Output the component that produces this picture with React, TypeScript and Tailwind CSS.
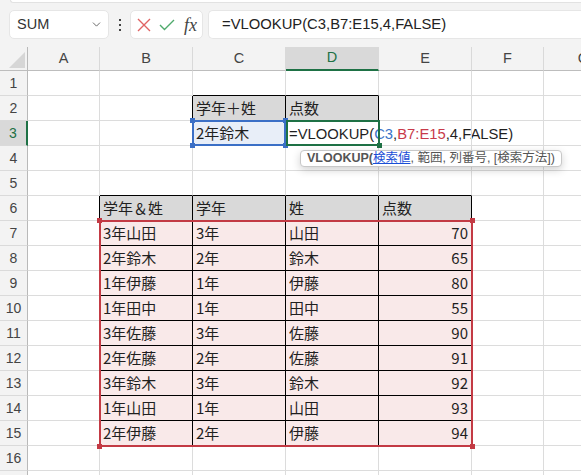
import { ChevronDown } from "lucide-react";

type Col = { key: string; w: string };

const COLS: Col[] = [
  { key: "A", w: "w-[72px]" },
  { key: "B", w: "w-[93px]" },
  { key: "C", w: "w-[93px]" },
  { key: "D", w: "w-[93px]" },
  { key: "E", w: "w-[93px]" },
  { key: "F", w: "w-[72px]" },
  { key: "G", w: "w-[80px]" },
];

const ROW_COUNT = 17;

const SCORES: [string, string, string, number][] = [
  ["3年山田", "3年", "山田", 70],
  ["2年鈴木", "2年", "鈴木", 65],
  ["1年伊藤", "1年", "伊藤", 80],
  ["1年田中", "1年", "田中", 55],
  ["3年佐藤", "3年", "佐藤", 90],
  ["2年佐藤", "2年", "佐藤", 91],
  ["3年鈴木", "3年", "鈴木", 92],
  ["1年山田", "1年", "山田", 93],
  ["2年伊藤", "2年", "伊藤", 94],
];

const inRange = (r: number, c: number, r1: number, r2: number, c1: number, c2: number) =>
  r >= r1 && r <= r2 && c >= c1 && c <= c2;

// cells that carry thin black borders
const inTable = (r: number, c: number) => inRange(r, c, 2, 3, 3, 4) || inRange(r, c, 6, 15, 2, 5);

const CELL_FONT = "font-['Noto_Sans_CJK_JP',sans-serif]";
const UI_FONT = "font-['Liberation_Sans','Noto_Sans_CJK_JP',sans-serif]";

function Formula() {
  return (
    <span className={`${UI_FONT} text-[14.8px]`}>
      =VLOOKUP(<span className="text-[#3a73c8]">C3</span>,<span className="text-[#c83a4a]">B7:E15</span>,4,FALSE)
    </span>
  );
}

function cellContent(r: number, c: number) {
  if (r === 2 && c === 3) return "学年＋姓";
  if (r === 2 && c === 4) return "点数";
  if (r === 3 && c === 3) return "2年鈴木";
  if (r === 6 && c >= 2 && c <= 5) return ["学年＆姓", "学年", "姓", "点数"][c - 2];
  if (r >= 7 && r <= 15 && c >= 2 && c <= 5) return SCORES[r - 7][c - 2];
  return null;
}

function Corner({ pos, color }: { pos: string; color: string }) {
  return <div className={`absolute w-[5px] h-[5px] ${pos} ${color}`} />;
}

function Cell({ r, c }: { r: number; c: number }) {
  const col = COLS[c - 1];
  const right = inTable(r, c) || inTable(r, c + 1) ? "border-r-black" : "border-r-[#dcdcdc]";
  const bottom = inTable(r, c) || inTable(r + 1, c) ? "border-b-black" : "border-b-[#dcdcdc]";

  let bg = "";
  if ((r === 2 && (c === 3 || c === 4)) || (r === 6 && c >= 2 && c <= 5)) bg = "bg-[#d9d9d9]";
  else if (r >= 7 && r <= 15 && c >= 2 && c <= 5) bg = "bg-[#f9e9e9]";
  else if (r === 3 && c === 3) bg = "bg-[#e8eef8]";

  const value = cellContent(r, c);
  const numeric = typeof value === "number";

  return (
    <div
      className={`relative shrink-0 h-[25px] border-r border-b ${col.w} ${right} ${bottom} ${bg} ${
        numeric ? "text-right" : "text-left"
      } px-[3px] leading-[24px] text-[15px] text-[#1f1f1f] whitespace-nowrap ${CELL_FONT}`}
    >
      {r === 3 && c === 4 ? <Formula /> : value}

      {/* active selection on C3 */}
      {r === 3 && c === 3 && (
        <div className="absolute -left-[1px] -top-[1px] w-[94px] h-[26px] border-2 border-[#3b6fc6] z-10">
          <Corner pos="-left-[4px] -top-[4px]" color="bg-[#3b6fc6]" />
          <Corner pos="-right-[4px] -top-[4px]" color="bg-[#3b6fc6]" />
          <Corner pos="-left-[4px] -bottom-[4px]" color="bg-[#3b6fc6]" />
          <Corner pos="-right-[4px] -bottom-[4px]" color="bg-[#3b6fc6]" />
        </div>
      )}

      {/* cell being edited */}
      {r === 3 && c === 4 && (
        <div className="absolute left-0 -top-[1px] w-[94px] h-[26px] border-2 border-[#1e7145] z-10">
          <div className="absolute -right-[4px] -bottom-[4px] w-[5px] h-[5px] bg-[#1e7145]" />
        </div>
      )}
    </div>
  );
}

function FormulaBar() {
  return (
    <div className="h-[47px] bg-[#f3f3f3]">
      <div className="h-[3px] ml-[10px] bg-white rounded-bl-[4px] border-b border-l border-[#e2e2e2]" />
      <div className="flex mt-[7px] pl-[9px]">
        <div className="w-[100px] h-[29px] bg-white rounded-[5px] border border-[#e6e6e6] flex items-center justify-between pl-[7px] pr-[5px]">
          <span className={`${UI_FONT} text-[14.5px] text-[#333]`}>SUM</span>
          <ChevronDown size={13} strokeWidth={1.6} className="text-[#555]" />
        </div>
        <div className="w-[21px] flex flex-col items-center justify-center gap-[3px]">
          <div className="w-[2px] h-[2px] bg-[#444]" />
          <div className="w-[2px] h-[2px] bg-[#444]" />
          <div className="w-[2px] h-[2px] bg-[#444]" />
        </div>
        <div className="w-[73px] h-[29px] bg-white rounded-[5px] border border-[#e6e6e6] flex items-center pl-[6px] gap-[8px]">
          <svg width="14" height="14" viewBox="0 0 14 14">
            <path d="M1 1 L13 13 M13 1 L1 13" stroke="#e06464" strokeWidth="1.4" fill="none" />
          </svg>
          <svg width="16" height="12" viewBox="0 0 16 12">
            <path d="M1 6 L5.5 10.5 L15 1" stroke="#4faa6c" strokeWidth="1.4" fill="none" />
          </svg>
          <span className="font-['Liberation_Serif',serif] italic text-[18px] leading-none text-[#444] ml-[1px]">
            fx
          </span>
        </div>
        <div className="ml-[5px] flex-1 h-[29px] bg-white rounded-l-[5px] border border-r-0 border-[#e6e6e6] flex items-center pl-[13px]">
          <span className={`${UI_FONT} text-[14.8px] text-[#222]`}>=VLOOKUP(C3,B7:E15,4,FALSE)</span>
        </div>
      </div>
    </div>
  );
}

export default function App() {
  const rows = Array.from({ length: ROW_COUNT }, (_, i) => i + 1);

  return (
    <div className="w-[581px] h-[475px] overflow-hidden bg-white">
      <FormulaBar />

      <div className="relative">
        {/* column headers */}
        <div className="flex h-[24px]">
          <div className="shrink-0 w-[28px] bg-[#f3f3f3] border-r border-b border-r-[#b9b9b9] border-b-[#bdbdbd]">
            <svg width="27" height="23" viewBox="0 0 27 23">
              <polygon points="25,5 25,21 9,21" fill="#d6d6d6" />
            </svg>
          </div>
          {COLS.map((col) => {
            const active = col.key === "D";
            return (
              <div
                key={col.key}
                className={`shrink-0 ${col.w} border-r border-[#d9d9d9] flex items-center justify-center ${UI_FONT} text-[14.5px] ${
                  active
                    ? "bg-[#d9d9d9] text-[#1e7145] border-b-2 border-b-[#1e7145]"
                    : "bg-[#f3f3f3] text-[#444] border-b border-b-[#bdbdbd]"
                }`}
              >
                {col.key}
              </div>
            );
          })}
        </div>

        {rows.map((r) => {
          const active = r === 3;
          return (
            <div key={r} className="flex h-[25px]">
              <div
                className={`shrink-0 w-[28px] border-b border-b-[#dadada] flex items-center justify-center ${UI_FONT} text-[14px] ${
                  active
                    ? "bg-[#d9d9d9] text-[#1e7145] border-r-2 border-r-[#1e7145]"
                    : "bg-[#f3f3f3] text-[#444] border-r border-r-[#b9b9b9]"
                }`}
              >
                {r}
              </div>
              {COLS.map((_, i) => (
                <Cell key={i} r={r} c={i + 1} />
              ))}
            </div>
          );
        })}

        {/* referenced range B7:E15 */}
        <div className="absolute left-[99px] top-[173px] w-[374px] h-[227px] border-2 border-[#c33a44] z-10">
          <Corner pos="-left-[4px] -top-[4px]" color="bg-[#c33a44]" />
          <Corner pos="-right-[4px] -top-[4px]" color="bg-[#c33a44]" />
          <Corner pos="-left-[4px] -bottom-[4px]" color="bg-[#c33a44]" />
          <Corner pos="-right-[4px] -bottom-[4px]" color="bg-[#c33a44]" />
        </div>

        {/* function argument hint */}
        <div
          className={`absolute left-[300px] top-[103px] h-[17px] px-[6px] flex items-center rounded-[4px] border border-[#c8c8c8] bg-white shadow-[0_3px_8px_rgba(0,0,0,0.18)] z-20 whitespace-nowrap text-[12.5px] text-[#555] ${UI_FONT}`}
        >
          <span className="font-bold">VLOOKUP(</span>
          <span className="text-[#1a4fd6] underline">検索値</span>
          <span>, 範囲, 列番号, [検索方法])</span>
        </div>
      </div>
    </div>
  );
}
